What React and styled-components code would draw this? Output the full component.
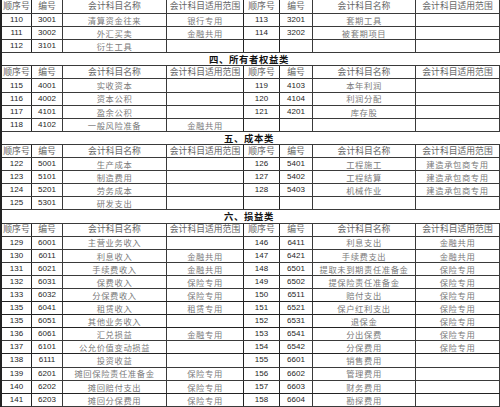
import styled, { createGlobalStyle } from "styled-components";

const GlobalStyle = createGlobalStyle`
  html, body {
    margin: 0;
    padding: 0;
    background: #fff;
  }
`;

const COLS = "30px 31px 104px 77px 36px 33px 103px 84px";

const HEAD = ["顺序号", "编号", "会计科目名称", "会计科目适用范围"];

const sections = [
  {
    title: null,
    rows: [
      ["110", "3001", "清算资金往来", "银行专用", "113", "3201", "套期工具", ""],
      ["111", "3002", "外汇买卖", "金融共用", "114", "3202", "被套期项目", ""],
      ["112", "3101", "衍生工具", "", "", "", "", ""],
    ],
  },
  {
    title: "四、所有者权益类",
    rows: [
      ["115", "4001", "实收资本", "", "119", "4103", "本年利润", ""],
      ["116", "4002", "资本公积", "", "120", "4104", "利润分配", ""],
      ["117", "4101", "盈余公积", "", "121", "4201", "库存股", ""],
      ["118", "4102", "一般风险准备", "金融共用", "", "", "", ""],
    ],
  },
  {
    title: "五、成本类",
    rows: [
      ["122", "5001", "生产成本", "", "126", "5401", "工程施工", "建造承包商专用"],
      ["123", "5101", "制造费用", "", "127", "5402", "工程结算", "建造承包商专用"],
      ["124", "5201", "劳务成本", "", "128", "5403", "机械作业", "建造承包商专用"],
      ["125", "5301", "研发支出", "", "", "", "", ""],
    ],
  },
  {
    title: "六、损益类",
    rows: [
      ["129", "6001", "主营业务收入", "", "146", "6411", "利息支出", "金融共用"],
      ["130", "6011", "利息收入", "金融共用", "147", "6421", "手续费支出", "金融共用"],
      ["131", "6021", "手续费收入", "金融共用", "148", "6501", "提取未到期责任准备金", "保险专用"],
      ["132", "6031", "保费收入", "保险专用", "149", "6502", "提保险责任准备金", "保险专用"],
      ["133", "6032", "分保费收入", "保险专用", "150", "6511", "赔付支出", "保险专用"],
      ["135", "6041", "租赁收入", "租赁专用", "151", "6521", "保户红利支出", "保险专用"],
      ["135", "6051", "其他业务收入", "", "152", "6531", "退保金", "保险专用"],
      ["136", "6061", "汇兑损益", "金融专用", "153", "6541", "分出保费", "保险专用"],
      ["137", "6101", "公允价值变动损益", "", "154", "6542", "分保费用", "保险专用"],
      ["138", "6111", "投资收益", "", "155", "6601", "销售费用", ""],
      ["139", "6201", "摊回保险责任准备金", "保险专用", "156", "6602", "管理费用", ""],
      ["140", "6202", "摊回赔付支出", "保险专用", "157", "6603", "财务费用", ""],
      ["141", "6203", "摊回分保费用", "保险专用", "158", "6604", "勘探费用", ""],
    ],
  },
];

// lines that print darker in the scan
const heavyRows = new Set(["133", "135", "137", "140"]);

const Sheet = styled.div`
  width: 500px;
  height: 407px;
  overflow: hidden;
  border-left: 2px solid #222;
  box-sizing: border-box;
  background: #fff;
`;

const Row = styled.div`
  display: grid;
  grid-template-columns: ${COLS};
  height: ${(p) => (p.$first ? "14px" : "13.1px")};
  box-sizing: border-box;
  border-bottom: ${(p) => (p.$heavy ? "1.6px solid #222" : "1px solid #3a3a3a")};
`;

const Cell = styled.div`
  display: flex;
  align-items: center;
  justify-content: center;
  border-right: ${(p) => (p.$heavy ? "1.6px solid #222" : "1px solid #3a3a3a")};
  overflow: hidden;
  white-space: nowrap;
  line-height: 1;
`;

const Num = styled(Cell)`
  font-family: "Liberation Sans", Arial, sans-serif;
  font-size: 8px;
  color: #1e1e1e;
`;

const Name = styled(Cell)`
  font-family: "Noto Sans CJK SC", sans-serif;
  font-size: 8.3px;
  letter-spacing: 0.6px;
  color: #7a7a7a;
`;

const Head = styled(Cell)`
  font-family: "Noto Sans CJK SC", sans-serif;
  font-size: 8.8px;
  color: #666;
`;

const TitleRow = styled.div`
  height: 13.1px;
  box-sizing: border-box;
  border-bottom: 1px solid #3a3a3a;
  display: flex;
  align-items: center;
  justify-content: center;
  padding-right: 4px;
  font-family: "Noto Sans CJK SC", sans-serif;
  font-weight: 700;
  font-size: 9.4px;
  letter-spacing: 0.6px;
  color: #111;
`;

const HeaderRow = ({ first }) => (
  <Row $first={first}>
    {[...HEAD, ...HEAD].map((h, i) => (
      <Head key={i} $heavy={i % 4 === 0 || i === 3}>
        {h}
      </Head>
    ))}
  </Row>
);

const DataRow = ({ cells }) => (
  <Row $heavy={heavyRows.has(cells[0])}>
    {cells.map((c, i) =>
      i % 4 < 2 ? (
        <Num key={i} $heavy={i % 4 === 0 || i === 3}>
          {c}
        </Num>
      ) : (
        <Name key={i} $heavy={i === 3}>
          {c}
        </Name>
      )
    )}
  </Row>
);

export default function App() {
  return (
    <>
      <GlobalStyle />
      <Sheet>
        {sections.map((s, si) => (
          <div key={si}>
            {s.title && <TitleRow>{s.title}</TitleRow>}
            <HeaderRow first={si === 0} />
            {s.rows.map((r, ri) => (
              <DataRow key={ri} cells={r} />
            ))}
          </div>
        ))}
      </Sheet>
    </>
  );
}
